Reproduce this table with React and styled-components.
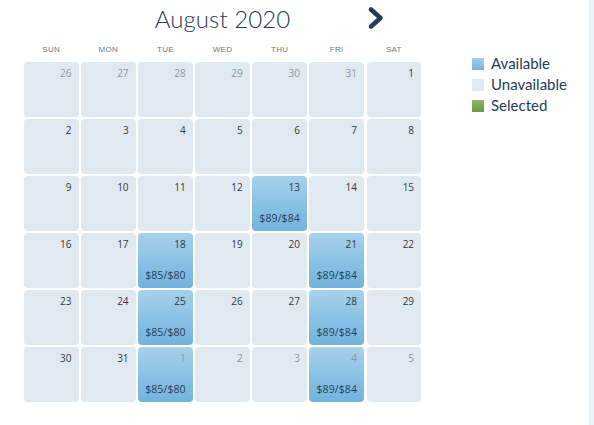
import React from "react";
import styled, { createGlobalStyle } from "styled-components";

const Global = createGlobalStyle`
  html, body { margin: 0; padding: 0; background: #fff; }
  body { font-family: "Open Sans", "Liberation Sans", sans-serif; }
`;

const Page = styled.div`
  display: flex;
  align-items: flex-start;
  width: 594px;
  height: 425px;
  overflow: hidden;
`;

const Calendar = styled.div`
  padding-left: 24px;
  width: 397px;
  flex: none;
`;

const Header = styled.div`
  display: grid;
  grid-template-columns: repeat(7, 54.5px);
  column-gap: 2.6px;
  height: 36px;
  align-items: center;
`;

const Title = styled.div`
  grid-column: 2 / 7;
  text-align: center;
  font-family: "Lato", "Liberation Sans", sans-serif;
  font-weight: 300;
  font-size: 24px;
  color: #253b56;
  letter-spacing: 0.1px;
`;

const NextButton = styled.div`
  grid-column: 7;
  display: flex;
  align-items: center;
  padding-left: 0px;
  height: 36px;
`;

const Weekdays = styled.div`
  display: grid;
  grid-template-columns: repeat(7, 54.5px);
  column-gap: 2.6px;
  height: 26px;
  align-items: center;
`;

const Weekday = styled.div`
  text-align: center;
  font-family: "Liberation Sans", sans-serif;
  font-size: 8px;
  color: #6c7886;
  letter-spacing: 0.3px;
`;

const Grid = styled.div`
  display: grid;
  grid-template-columns: repeat(7, 54.5px);
  grid-auto-rows: 54.5px;
  column-gap: 2.6px;
  row-gap: 2.6px;
`;

const Cell = styled.div`
  border-radius: 4px;
  background: ${(p) =>
    p.$available
      ? "linear-gradient(to bottom, #a7d1ea 0%, #8ac2e5 50%, #72b3dd 100%)"
      : "#e1e9f0"};
  display: flex;
  flex-direction: column;
  justify-content: space-between;
  padding: 5px 7px 7px 7px;
  box-sizing: border-box;
`;

const DayNum = styled.div`
  text-align: right;
  font-family: "Open Sans", "Liberation Sans", sans-serif;
  font-size: 10px;
  line-height: 12px;
  color: ${(p) => (p.$muted ? "#8c98a4" : "#34383e")};
`;

const Price = styled.div`
  text-align: center;
  font-family: "Open Sans", "Liberation Sans", sans-serif;
  font-size: 10.5px;
  font-weight: 500;
  line-height: 12px;
  color: #2a3d52;
  letter-spacing: 0.1px;
  margin-left: -3px;
  margin-right: -3px;
`;

const Legend = styled.div`
  margin-left: 51px;
  margin-top: 55px;
  display: flex;
  flex-direction: column;
  gap: 4px;
`;

const LegendItem = styled.div`
  display: flex;
  align-items: center;
  gap: 7px;
  font-family: "Lato", "Liberation Sans", sans-serif;
  font-size: 15px;
  line-height: 17px;
  color: #253b56;
`;

const Swatch = styled.span`
  width: 12px;
  height: 12px;
  flex: none;
  background: ${(p) => p.$bg};
`;

const SideStrip = styled.div`
  margin-left: auto;
  width: 5px;
  height: 425px;
  background: #e9f3fb;
  flex: none;
`;

const weeks = [
  [[26, 1], [27, 1], [28, 1], [29, 1], [30, 1], [31, 1], [1, 0]],
  [[2], [3], [4], [5], [6], [7], [8]],
  [[9], [10], [11], [12], [13, 0, "$89/$84"], [14], [15]],
  [[16], [17], [18, 0, "$85/$80"], [19], [20], [21, 0, "$89/$84"], [22]],
  [[23], [24], [25, 0, "$85/$80"], [26], [27], [28, 0, "$89/$84"], [29]],
  [[30], [31], [1, 1, "$85/$80"], [2, 1], [3, 1], [4, 1, "$89/$84"], [5, 1]],
];

export default function App() {
  return (
    <>
      <Global />
      <Page>
        <Calendar>
          <Header>
            <Title>August 2020</Title>
            <NextButton>
              <svg width="18" height="24" viewBox="0 0 18 24">
                <path
                  d="M4 3.5 L13.5 12 L4 20.5"
                  fill="none"
                  stroke="#253b56"
                  strokeWidth="4.6"
                  strokeLinecap="round"
                  strokeLinejoin="round"
                />
              </svg>
            </NextButton>
          </Header>
          <Weekdays>
            {["SUN", "MON", "TUE", "WED", "THU", "FRI", "SAT"].map((d) => (
              <Weekday key={d}>{d}</Weekday>
            ))}
          </Weekdays>
          <Grid>
            {weeks.flat().map(([n, muted, price], i) => (
              <Cell key={i} $available={!!price}>
                <DayNum $muted={!!muted}>{n}</DayNum>
                {price && <Price>{price}</Price>}
              </Cell>
            ))}
          </Grid>
        </Calendar>
        <Legend>
          <LegendItem>
            <Swatch $bg="linear-gradient(to bottom, #a7d1ea, #72b3dd)" />
            Available
          </LegendItem>
          <LegendItem>
            <Swatch $bg="#e1e9f0" />
            Unavailable
          </LegendItem>
          <LegendItem>
            <Swatch $bg="linear-gradient(to bottom, #8db86a, #6a9a44)" />
            Selected
          </LegendItem>
        </Legend>
        <SideStrip />
      </Page>
    </>
  );
}
